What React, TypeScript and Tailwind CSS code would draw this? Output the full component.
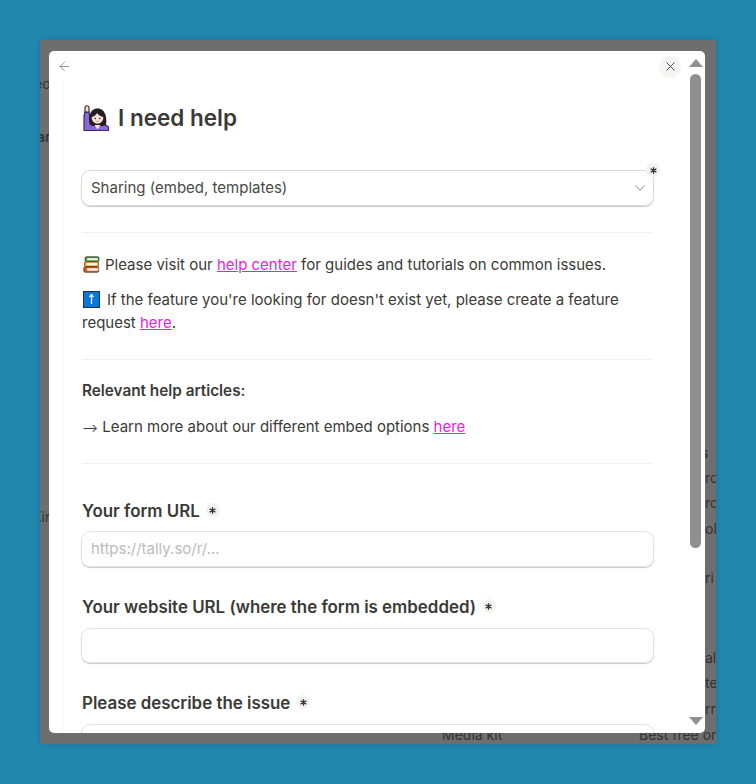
import React from 'react';
import { ArrowLeft, ChevronDown, X } from 'lucide-react';

const font = { fontFamily: 'Inter, "Liberation Sans", sans-serif' };

function Required({ className = '' }: { className?: string }) {
  return (
    <span className={`flex h-[14px] w-[14px] items-center justify-center rounded-full bg-[#f2f2f1] ${className}`}>
      <svg width="7" height="7" viewBox="0 0 8 8" fill="none" stroke="#37352f" strokeWidth="1.5" strokeLinecap="round">
        <path d="M4 .8v6.4M1.2 2.4l5.6 3.2M6.8 2.4 1.2 5.6" />
      </svg>
    </span>
  );
}

function WomanEmoji() {
  return (
    <svg width="28" height="28" viewBox="0 0 28 28" className="shrink-0">
      <path d="M2 26.500V12L3 8h4l1 6 5 4h3l5 1 5.500 4v3.500z" fill="#8a68d6" stroke="#3b2b63" strokeWidth="1.2" strokeLinejoin="round" />
      <path d="M3 8V3.500C3 1.500 6.500 1 7 3.500V8z" fill="#f6dccb" stroke="#222" strokeWidth="1.1" />
      <path d="M7.500 20c-1-5-.5-15.500 8-15.500S25 15 24 21l-3 1H10z" fill="#231f20" />
      <circle cx="15.500" cy="14" r="5.800" fill="#f6dfd3" />
      <path d="M9.500 13c2.500-.5 4.500-2 5.500-4 1.500 2 3.500 3.500 6.500 4-.5-4.500-3-6-6-6s-5.500 1.500-6 6z" fill="#231f20" />
      <circle cx="13.200" cy="14.500" r=".8" fill="#222" />
      <circle cx="17.800" cy="14.500" r=".8" fill="#222" />
      <path d="M14.500 17.300h2" stroke="#b5655a" strokeWidth=".7" />
      <path d="M12.500 21h6l-3 4.500z" fill="#f6dfd3" />
    </svg>
  );
}

function BooksEmoji() {
  return (
    <svg width="17" height="17" viewBox="0 0 16 16" className="shrink-0">
      <rect x="2" y=".8" width="13" height="4.400" rx="1.200" fill="#43a047" stroke="#2e3b2a" strokeWidth=".8" />
      <rect x="4" y="2" width="10" height="2" fill="#f1f1e6" />
      <rect x="1.500" y="5.400" width="13" height="4.600" rx="1.200" fill="#f2b632" stroke="#5b4714" strokeWidth=".8" />
      <rect x="3.500" y="6.600" width="10" height="2.100" fill="#f7f3dc" />
      <rect x=".8" y="10.200" width="14" height="5" rx="1.200" fill="#d9622b" stroke="#5a2c14" strokeWidth=".8" />
      <rect x="4" y="11.500" width="10.500" height="2.400" fill="#f3efe4" />
    </svg>
  );
}

function UpEmoji() {
  return (
    <svg width="17" height="17" viewBox="0 0 17 17" className="shrink-0">
      <rect x=".5" y=".5" width="16" height="16" fill="#0a78d6" stroke="#17324f" strokeWidth="1" />
      <path d="M8.500 3.500v9.500M6.500 6l2-2.500 2 2.500" fill="none" stroke="#e8f6ff" strokeWidth="1.300" />
    </svg>
  );
}

function Field({ label, placeholder, height, gap }: { label: string; placeholder?: string; height: string; gap: string }) {
  return (
    <div>
      <div className="flex h-5 items-center gap-[6px] pl-[1px] text-[16.900px] font-semibold text-[#3b3a36]">
        <span className="pt-[3px]">{label}</span>
        <Required />
      </div>
      <div className={`flex items-center rounded-[9px] border border-[#e4e3e1] px-[9px] pt-[1px] text-[15px] text-[#bdbcb9] shadow-[0_1px_1px_rgba(0,0,0,0.22)] ${gap} ${height}`}>
        {placeholder}
      </div>
    </div>
  );
}

export default function App() {
  return (
    <div className="flex h-screen w-full items-center justify-center bg-[#2287ad]" style={font}>
      <div className="relative h-[704px] w-[676px] overflow-hidden bg-[#6e6e6e] pb-[11px] pl-[9px] pr-[11px] pt-[11px] shadow-[0_0_6px_rgba(0,0,0,0.15)]">
        {/* page behind the modal */}
        <div className="text-[14px] text-[#333333]">
          <span className="absolute left-[-15px] top-[33px]">Seo</span>
          <span className="absolute left-[-12px] top-[86px] font-semibold">Par</span>
          <span className="absolute left-[-8px] top-[466px]">Xir</span>
          <span className="absolute left-[661px] top-[402px]">s</span>
          <span className="absolute left-[665px] top-[427px]">ro</span>
          <span className="absolute left-[665px] top-[452px]">ro</span>
          <span className="absolute left-[665px] top-[478px]">ol</span>
          <span className="absolute left-[665px] top-[527px]">ri</span>
          <span className="absolute left-[665px] top-[607px]">al</span>
          <span className="absolute left-[665px] top-[632px]">te</span>
          <span className="absolute left-[665px] top-[658px]">rr</span>
          <span className="absolute left-[402px] top-[684px]">Media kit</span>
          <span className="absolute left-[599px] top-[684px] whitespace-nowrap">Best free online</span>
        </div>

        <div className="relative z-10 flex h-[682px] w-[656px] overflow-hidden rounded-[5px] bg-white">
          {/* modal content */}
          <div className="w-[640px] shrink-0">
            <div className="flex h-[32px] items-center justify-between pb-[1px] pl-[8px] pr-[8px]">
              <ArrowLeft size={15} strokeWidth={1.15} className="text-[#6f6e69]" />
              <span className="flex h-[22px] w-[22px] items-center justify-center rounded-full bg-[#f5f5f4]">
                <X size={15} strokeWidth={1.4} className="text-[#37352f]" />
              </span>
            </div>

            <div className="ml-[14px] h-[650px] overflow-hidden border-l border-[#f8f8f7] pl-[18px]">
              <h1 className="mt-[17px] flex h-[36px] items-center gap-[8px] text-[22.500px] font-semibold text-[#3b3a36]">
                <WomanEmoji />
                I need help
              </h1>

              <div className="relative mt-[34px] flex h-[36px] w-[573px] -translate-x-[1px] items-center justify-between rounded-[9px] border border-[#dcdbd9] pl-[9px] pr-[4px] text-[15px] text-[#4a4944] shadow-[0_1px_1px_rgba(0,0,0,0.22)]">
                Sharing (embed, templates)
                <ChevronDown size={18} strokeWidth={1.1} className="text-[#6f6e69]" />
                <Required className="absolute right-[-7px] top-[-8px]" />
              </div>

              <div className="mt-[26px] h-px w-[570px] bg-[#efefee]" />

              <div className="w-[570px] text-[15px] leading-[23px] text-[#3b3a36]">
                <p className="mt-[20px] flex items-center gap-[5px] pl-[1px]">
                  <BooksEmoji />
                  <span>
                    Please visit our <a className="text-[#ea1ddd] underline">help center</a> for guides and tutorials on common issues.
                  </span>
                </p>
                <p className="mt-[12px]">
                  <span className="ml-[1px] mr-[7px] inline-block translate-y-[3px]"><UpEmoji /></span>
                  If the feature you're looking for doesn't exist yet, please create a feature request <a className="text-[#ea1ddd] underline">here</a>.
                </p>
              </div>

              <div className="mt-[25px] h-px w-[570px] bg-[#efefee]" />

              <p className="mt-[21px] text-[15.300px] font-semibold leading-[20px] text-[#3b3a36]">Relevant help articles:</p>
              <p className="mt-[14px] text-[15px] leading-[23px] text-[#3b3a36]">
                <span className="text-[12px]">⟶</span> Learn more about our different embed options <a className="text-[#ea1ddd] underline">here</a>
              </p>

              <div className="mt-[24px] h-px w-[570px] bg-[#efefee]" />

              <div className="mt-[36px] flex w-[573px] -translate-x-[1px] flex-col gap-[29px]">
                <Field label="Your form URL" placeholder="https://tally.so/r/..." height="h-[36px]" gap="mt-[11px]" />
                <Field label="Your website URL (where the form is embedded)" height="h-[35px]" gap="mt-[12px]" />
                <Field label="Please describe the issue" height="h-[80px]" gap="mt-[12px]" />
              </div>
            </div>
          </div>

          {/* scrollbar */}
          <div className="flex w-[16px] flex-col items-center pr-[3px] pt-[8px]">
            <span className="h-0 w-0 shrink-0 border-x-[7px] border-b-[8px] border-x-transparent border-b-[#909090]" />
            <span className="mt-[7px] h-[474px] w-[11px] shrink-0 rounded-full bg-[#8f8f8f]" />
            <span className="mt-[169px] h-0 w-0 shrink-0 border-x-[7px] border-t-[8px] border-x-transparent border-t-[#909090]" />
          </div>
        </div>
      </div>
    </div>
  );
}
